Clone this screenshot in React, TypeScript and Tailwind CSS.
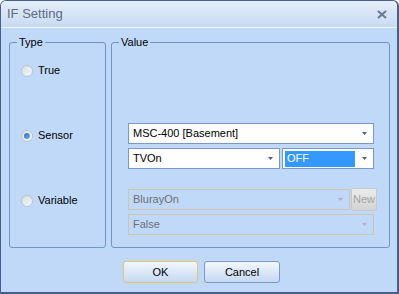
const font = { fontFamily: '"Liberation Sans", Arial, sans-serif' };

function Arrow({ disabled = false }: { disabled?: boolean }) {
  return (
    <svg width="5" height="3" viewBox="0 0 5 3" className="shrink-0">
      <path d="M0 0H5L2.5 3Z" fill={disabled ? "#c9a3b8" : "#4f5f82"} />
    </svg>
  );
}

function Combo({
  text,
  width,
  disabled = false,
  selected = false,
}: {
  text: string;
  width: string;
  disabled?: boolean;
  selected?: boolean;
}) {
  return (
    <div
      className={`${width} h-[21px] flex items-center border pr-[6px] ${
        disabled ? "border-[#cdc6b3] bg-[#c1d9f9] text-[#6f6f6f]" : "border-[#7c98c8] bg-white text-black"
      } ${selected ? "pl-[2px]" : "pl-[4px]"}`}
    >
      {selected ? (
        <div className="h-[16px] w-[70px] bg-[#3399ff] text-white flex items-center pl-[2px]">{text}</div>
      ) : (
        <span className="leading-none">{text}</span>
      )}
      <div className="flex-1" />
      <Arrow disabled={disabled} />
    </div>
  );
}

function Radio({ label, checked = false }: { label: string; checked?: boolean }) {
  return (
    <div className="flex items-center gap-[5px] h-[13px]">
      <div className="w-[12px] h-[12px] rounded-full border border-[#b9c3cf] bg-gradient-to-br from-[#d9dde3] to-[#f7f8fa] flex items-center justify-center">
        {checked && <div className="w-[6px] h-[6px] rounded-full bg-gradient-to-br from-[#2c6fb6] to-[#75b2ea]" />}
      </div>
      <span className="text-black leading-none">{label}</span>
    </div>
  );
}

export default function App() {
  return (
    <div className="w-[399px] h-[294px] text-[11px] overflow-hidden" style={font}>
      <div className="w-[399px] h-[294px] border border-r-2 border-b-2 border-[#45608a] rounded-t-[6px] bg-[#c1d9f9] flex flex-col overflow-hidden">
        <div className="h-[27px] shrink-0 bg-gradient-to-b from-[#e5eefa] to-[#c8daf2] border-b border-[#eef5fd] flex items-center pl-[6px] pr-[10px]">
          <span className="text-[13px] text-[#5c6b80]">IF Setting</span>
          <div className="flex-1" />
          <svg width="10" height="9" viewBox="0 0 10 9">
            <path d="M1 1L9 8M9 1L1 8" stroke="#6a7b95" strokeWidth="2.2" />
          </svg>
        </div>

        <div className="flex gap-[5px] pl-[8px] pt-[8px]">
          <fieldset className="w-[97px] h-[212px] border border-[#6e93cf] rounded-[3px]">
            <legend className="ml-[7px] px-[2px] text-black leading-[13px]">Type</legend>
            <div className="flex flex-col pl-[11px] pt-[15px] gap-[52px]">
              <Radio label="True" />
              <Radio label="Sensor" checked />
              <Radio label="Variable" />
            </div>
          </fieldset>

          <fieldset className="w-[279px] h-[212px] border border-[#6e93cf] rounded-[3px]">
            <legend className="ml-[7px] px-[2px] text-black leading-[13px]">Value</legend>
            <div className="flex flex-col pl-[16px] pt-[74px]">
              <Combo text="MSC-400 [Basement]" width="w-[246px]" />
              <div className="flex gap-[2px] mt-[4px]">
                <Combo text="TVOn" width="w-[152px]" />
                <Combo text="OFF" width="w-[92px]" selected />
              </div>
              <div className="flex items-center gap-[1px] mt-[19px]">
                <Combo text="BlurayOn" width="w-[222px]" disabled />
                <div className="w-[26px] h-[23px] rounded-[2px] border border-[#c8c8c8] bg-gradient-to-b from-[#ececec] to-[#d3d3d3] text-[#a3a3a3] flex items-center justify-center">
                  New
                </div>
              </div>
              <div className="mt-[3px]">
                <Combo text="False" width="w-[246px]" disabled />
              </div>
            </div>
          </fieldset>
        </div>

        <div className="flex gap-[6px] pl-[122px] mt-[13px]">
          <div className="w-[75px] h-[22px] rounded-[3px] border border-[#e6c66a] bg-gradient-to-b from-[#f3f7fd] via-[#dce8f8] to-[#c6d8f1] flex items-center justify-center text-black">
            OK
          </div>
          <div className="w-[76px] h-[22px] rounded-[3px] border border-[#7d98c6] bg-gradient-to-b from-[#f3f7fd] via-[#dce8f8] to-[#c6d8f1] flex items-center justify-center text-black">
            Cancel
          </div>
        </div>
      </div>
    </div>
  );
}
